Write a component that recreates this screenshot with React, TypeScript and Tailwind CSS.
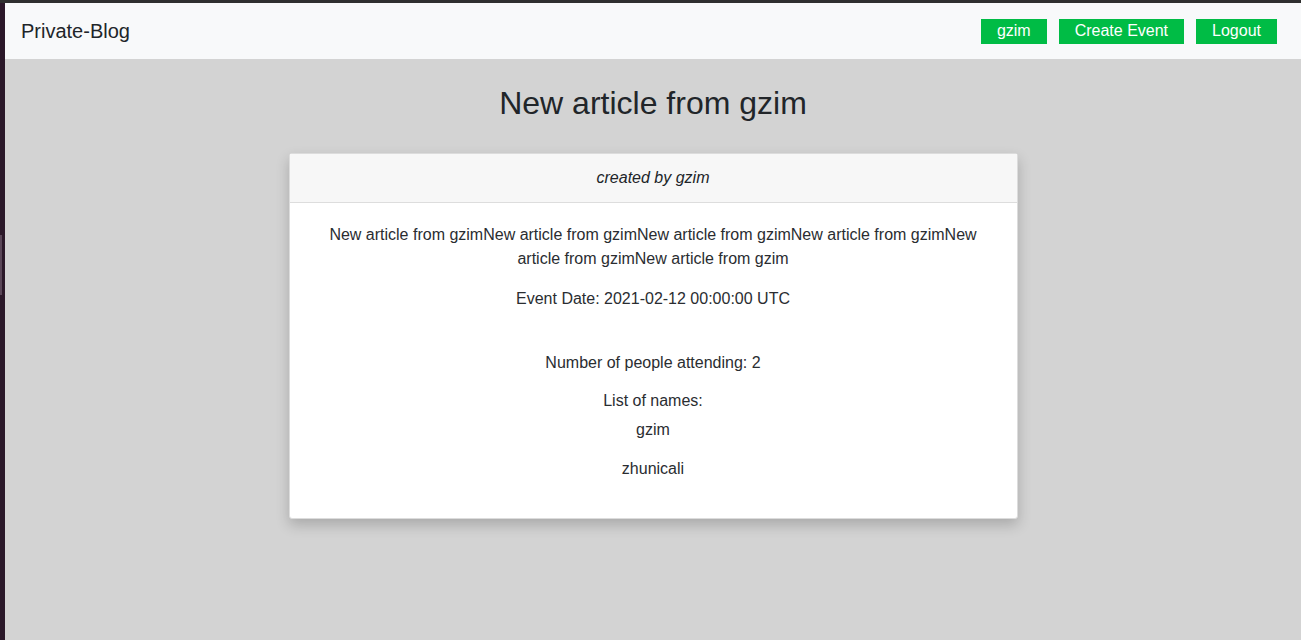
export default function App() {
  return (
    <div
      className="flex h-[640px] w-full flex-col overflow-hidden bg-[#2f2f2f] pt-[3px] text-[#212529]"
      style={{ fontFamily: '"Liberation Sans", Arial, sans-serif' }}
    >
      <div className="flex flex-1">
        {/* Left window edge */}
        <div className="relative w-[5px] bg-[#2b1829]">
          <div className="absolute left-0 top-[232px] h-[60px] w-[2px] bg-[#5a4658]" />
        </div>

        <div className="flex flex-1 flex-col bg-[#d3d3d3]">
          {/* Navbar */}
          <nav className="flex h-[56px] items-center justify-between bg-[#f8f9fa] pl-4 pr-6">
            <span className="text-[20px] leading-none">Private-Blog</span>
            <div className="flex items-center gap-3">
              <button className="h-[25px] bg-[#00bc45] px-4 text-[16px] leading-none text-white">
                gzim
              </button>
              <button className="h-[25px] bg-[#00bc45] px-4 text-[16px] leading-none text-white">
                Create Event
              </button>
              <button className="h-[25px] bg-[#00bc45] px-4 text-[16px] leading-none text-white">
                Logout
              </button>
            </div>
          </nav>

          {/* Content */}
          <div className="flex flex-col items-center">
            <h2 className="mt-[25px] text-[32px] leading-[38px]">New article from gzim</h2>

            <div className="mt-[31px] w-[729px] rounded-[3px] border border-[#dcdcdc] bg-white text-center shadow-[0_6px_14px_rgba(0,0,0,0.2)]">
              <div className="border-b border-[#dddddd] bg-[#f7f7f7] py-3 text-[16px] italic leading-6">
                created by gzim
              </div>
              <div className="px-5 pb-[37px] pt-[20px] text-[16px] leading-6 text-[#2a2d31]">
                <p>
                  New article from gzimNew article from gzimNew article from gzimNew article from gzimNew
                  article from gzimNew article from gzim
                </p>
                <p className="mt-4">Event Date: 2021-02-12 00:00:00 UTC</p>
                <p className="mt-[40px]">Number of people attending: 2</p>
                <p className="mt-[14px]">List of names:</p>
                <p className="mt-[5px]">gzim</p>
                <p className="mt-[15px]">zhunicali</p>
              </div>
            </div>
          </div>
        </div>
      </div>
    </div>
  );
}
